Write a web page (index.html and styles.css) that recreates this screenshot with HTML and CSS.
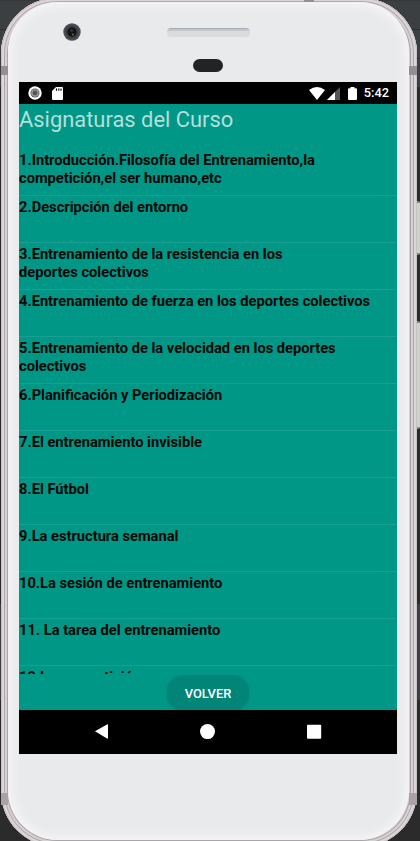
FILE: index.html
```
<!DOCTYPE html>
<html lang="es">
<head>
<meta charset="utf-8">
<title>Asignaturas del Curso</title>
<link rel="stylesheet" href="styles.css">
</head>
<body>
<div class="desk">
  <div class="side-button power"></div>
  <div class="side-button volume"></div>
  <div class="phone">
    <i class="antenna antenna-top"></i>
    <i class="antenna left upper"></i><i class="antenna right upper"></i>
    <i class="antenna left lower"></i><i class="antenna right lower"></i>
    <div class="face">
      <div class="forehead">
        <svg class="camera" width="18" height="18" viewBox="0 0 18 18"><circle cx="9" cy="9" r="8.7" fill="#4c4e52"/><circle cx="9" cy="9" r="6.4" fill="#383a3d"/><circle cx="9" cy="9" r="4.5" fill="#111416"/><circle cx="8.5" cy="7.5" r="1.8" fill="#25303a"/><circle cx="10" cy="11.5" r="1" fill="#716c2c"/></svg>
        <div class="speaker"></div>
        <div class="sensor"></div>
      </div>
      <div class="screen">
        <header class="status">
          <svg width="14" height="14" viewBox="0 0 14 14"><circle cx="7" cy="7" r="6.7" fill="#fff"/><circle cx="7" cy="7" r="4.5" fill="#555"/><circle cx="7" cy="7" r="3.8" fill="#999"/><circle cx="7" cy="7" r="2.4" fill="#555"/></svg>
          <svg class="card" width="11" height="13" viewBox="0 0 11 13"><path d="M4 0h6a1 1 0 0 1 1 1v11a1 1 0 0 1-1 1H1a1 1 0 0 1-1-1V4z" fill="#fff"/><path d="M4.5 1.5v2.3M6.8 1.5v2.3M9 1.5v2.3" stroke="#000" stroke-width="1.1"/></svg>
          <svg class="wifi" width="16" height="13" viewBox="0 0 16 13"><path d="M0 3Q8-3 16 3L8 13z" fill="#fff"/></svg>
          <svg class="signal" width="13" height="13" viewBox="0 0 13 13"><path d="M13 0v13H0z" fill="#555"/><path d="M8 5v8H0z" fill="#fff"/></svg>
          <svg class="battery" width="9" height="13" viewBox="0 0 9 13"><path d="M2.5 0h4v1.2H8a1 1 0 0 1 1 1V12a1 1 0 0 1-1 1H1a1 1 0 0 1-1-1V2.2a1 1 0 0 1 1-1h1.5z" fill="#fff"/></svg>
          <span class="clock">5:42</span>
        </header>
        <main class="app">
          <h1>Asignaturas del Curso</h1>
          <ul class="list">
            <li>1.Introducción.Filosofía del Entrenamiento,la<br>competición,el ser humano,etc</li>
            <li>2.Descripción del entorno</li>
            <li>3.Entrenamiento de la resistencia en los<br>deportes colectivos</li>
            <li>4.Entrenamiento de fuerza en los deportes colectivos</li>
            <li>5.Entrenamiento de la velocidad en los deportes<br>colectivos</li>
            <li>6.Planificación y Periodización</li>
            <li>7.El entrenamiento invisible</li>
            <li>8.El Fútbol</li>
            <li>9.La estructura semanal</li>
            <li>10.La sesión de entrenamiento</li>
            <li>11. La tarea del entrenamiento</li>
            <li>12.La competición</li>
          </ul>
          <button class="back">VOLVER</button>
        </main>
        <nav class="nav">
          <svg width="378" height="44" viewBox="0 0 378 44"><path d="M76 21.2 88 14.5Q89 14 89 15v13q0 1-1 .5z" fill="#fff"/><circle cx="188.5" cy="21.6" r="7.5" fill="#fff"/><rect x="288" y="14.8" width="14.2" height="14" rx="1" fill="#fff"/></svg>
        </nav>
      </div>
    </div>
  </div>
</div>
</body>
</html>
```
FILE: styles.css
```
* { box-sizing: border-box; }
body { margin: 0; font-family: Roboto, "Liberation Sans", sans-serif; }
.desk {
  position: relative;
  width: 420px;
  height: 841px;
  overflow: hidden;
  background: linear-gradient(#353738 0 1px, #3c3f41 1px 29px, #2d2f30 29px 30px, #3c3f41 30px 58px, #292b2c 58px 59px, #3c3f41 59px 87px, #2b2b2b 87px 604px, #3c3f41 604px 700px, #2b2b2b 700px);
}
.phone {
  position: relative;
  width: 416px;
  height: 849px;
  margin: -2px 0 0 1px;
  padding: 4px 8px 7px 7px;
  border-radius: 56px;
  background: #d5ced1;
  box-shadow: inset 0 0 0 1px #c8c1c4, inset 0 0 0 3px #ddd6d9, inset 0 0 0 4px #b0a8ab, inset 0 0 0 6px #d8d1d4, inset 0 0 0 7px #aaa5a8;
}
.face {
  height: 100%;
  padding: 0 11px;
  border-radius: 50px;
  background: #e9eaec;
  box-shadow: inset 0 0 8px 4px #f5f5f7;
}
.forehead {
  display: grid;
  grid-template-columns: 148px 83px 1fr;
  grid-template-rows: 56px 24px;
  height: 80px;
}
.camera { margin: 21px 0 0 44px; }
.speaker {
  height: 9px;
  margin-top: 26px;
  border-radius: 4px;
  background: linear-gradient(#a6adb6 0 1px, #c3c7cc 1px 3px, #dadcdf 3px);
}
.sensor {
  grid-area: 2 / 2;
  width: 30px;
  height: 13px;
  margin: 1px 0 0 26px;
  border-radius: 7px;
  background: #222327;
}
.screen { width: 378px; height: 672px; background: #000; }
.status { display: flex; align-items: center; height: 22px; padding: 0 8px 0 9px; color: #fff; }
.status svg { flex: none; }
.card { margin-left: 10px; }
.wifi { margin-left: auto; }
.signal { margin-left: 2px; }
.battery { margin-left: 8px; }
.clock { margin-left: 7px; font-size: 12.8px; font-weight: 500; line-height: 22px; }
.app { display: flex; flex-direction: column; height: 606px; overflow: hidden; background: #009787; }
h1 { height: 45px; margin: 0; color: #b2dfda; font-size: 21.9px; font-weight: 400; line-height: 31px; white-space: nowrap; }
.list { height: 525px; margin: 0; padding: 0; overflow: hidden; list-style: none; }
li {
  height: 47px;
  padding-top: 3px;
  color: #000805;
  font-size: 14.67px;
  font-weight: 700;
  line-height: 17.5px;
  white-space: nowrap;
  border-bottom: 0;
  background: linear-gradient(#189f91, #189f91) 0 100% / 100% 1.5px no-repeat;
}
.back {
  flex: none;
  width: 82px;
  height: 35px;
  margin: 1px 0 0 148px;
  padding: 1px 0 0;
  border: 0;
  border-radius: 16px;
  background: #008577;
  box-shadow: 0 1px 2px #006e6380;
  color: #fff;
  font: 500 12.9px Roboto, sans-serif;
}
.nav { height: 44px; }
.nav svg { display: block; }
.antenna { position: absolute; background: #958e92; }
.antenna-top { left: 303px; top: 1px; width: 10px; height: 3px; }
.left { left: 0; width: 7px; }
.right { right: 0; width: 8px; }
.upper { top: 68px; height: 9px; }
.lower { top: 795px; height: 12px; background: #aaa2a6; }
.side-button { position: absolute; right: 0; width: 5px; border: solid #8a8a88; border-width: 2px 0; border-radius: 2px; background: #cfcfcc; }
.power { top: 201px; height: 54px; }
.volume { top: 321px; height: 108px; }
```
